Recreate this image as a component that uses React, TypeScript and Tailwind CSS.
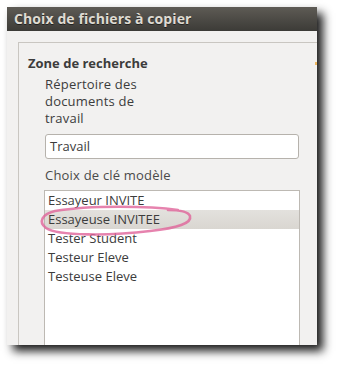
import React from "react";

const items = [
  "Essayeur INVITE",
  "Essayeuse INVITEE",
  "Tester Student",
  "Testeur Eleve",
  "Testeuse Eleve",
];

export default function App() {
  return (
    <div
      className="relative w-[340px] h-[368px] bg-white overflow-hidden pl-[7px] pt-[7px]"
      style={{ fontFamily: '"Open Sans", "DejaVu Sans", sans-serif' }}
    >
      <div className="w-[310px] h-[338px] flex flex-col overflow-hidden shadow-[6px_6px_9px_rgba(0,0,0,0.9)]">
        <div className="h-[24px] shrink-0 flex items-center px-[7px] bg-gradient-to-b from-[#5e5b55] to-[#3c3b37]">
          <span className="text-[14px] font-bold text-[#dfdbd2] leading-none tracking-[0.1px] [text-shadow:0_1px_0_rgba(0,0,0,0.5)]">
            Choix de fichiers à copier
          </span>
        </div>
        <div className="flex-1 bg-[#f2f1f0] pl-[11px] pt-[11px] overflow-hidden">
          <div className="w-[320px] h-[400px] border-l border-t border-[#c9c6c1] pl-[9px] pt-[11px] text-[#3c3c3c]">
            <div className="text-[13px] font-bold leading-[18px]">Zone de recherche</div>
            <div className="pl-[17px]">
              <div className="mt-[4px] text-[13px] leading-[17px] tracking-[0.2px]">
                Répertoire des
                <br />
                documents de
                <br />
                travail
              </div>
              <div className="mt-[7px] w-[254px] h-[25px] bg-white border border-[#b6b2ac] rounded-[3px] flex items-center pl-[4px] text-[13px]">
                Travail
              </div>
              <div className="mt-[8px] text-[13px] leading-[17px] text-[#4a4a4a] tracking-[0.2px]">
                Choix de clé modèle
              </div>
              <div className="mt-[6px] -ml-[1px] w-[256px] h-[200px] bg-white border border-[#bdb9b3]">
                {items.map((it, i) => (
                  <div
                    key={it}
                    className={
                      "h-[19px] flex items-center pl-[3px] text-[13px] " +
                      (i === 1 ? "bg-gradient-to-b from-[#e3e1dd] to-[#d9d6d1]" : "")
                    }
                  >
                    {it}
                  </div>
                ))}
              </div>
            </div>
          </div>
        </div>
      </div>
      <div className="absolute left-[315px] top-[62px] w-[2px] h-[3px] bg-[#f0b860]" />
      <svg
        className="absolute left-0 top-0 pointer-events-none"
        width="340"
        height="368"
        viewBox="0 0 340 368"
      >
        <path
          d="M 178 210 C 150 206, 90 205, 55 211 C 42 214, 38 222, 46 228 C 58 236, 110 236, 150 231 C 178 228, 192 223, 190 216 C 188 211, 178 210, 168 210"
          fill="none"
          stroke="#e0649a"
          strokeOpacity="0.8"
          strokeWidth="2.6"
          strokeLinecap="round"
        />
      </svg>
    </div>
  );
}
